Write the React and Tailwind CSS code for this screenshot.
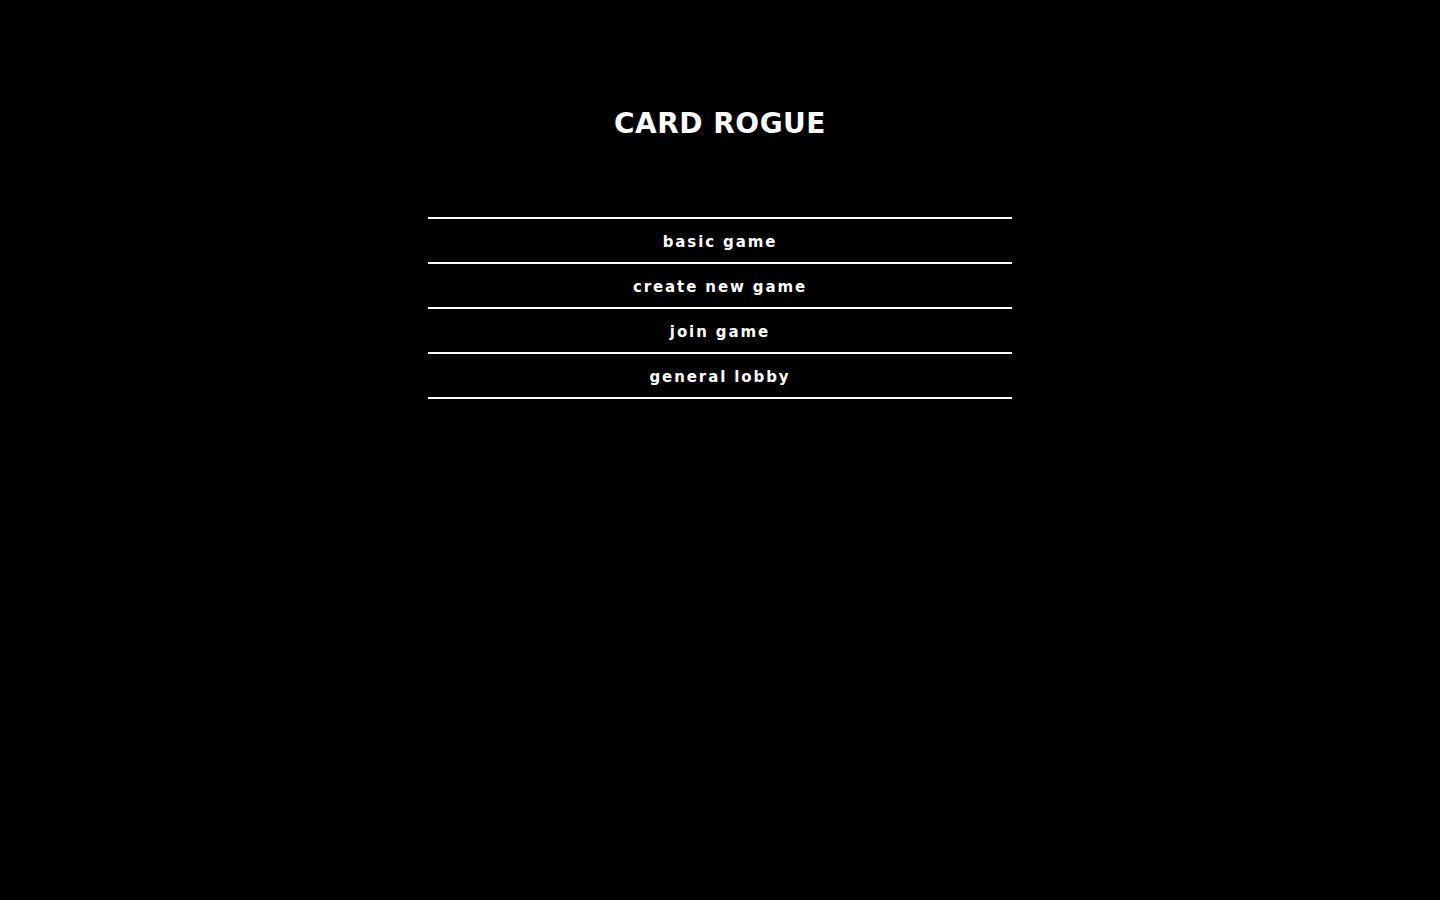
const items = ['basic game', 'create new game', 'join game', 'general lobby'];

export default function App() {
  return (
    <div className="min-h-screen bg-black text-white pt-[102px] font-['DejaVu_Sans',sans-serif]">
      {/* Title */}
      <h1 className="text-center text-[28px] leading-[44px] font-bold tracking-[0.5px]">CARD ROGUE</h1>

      {/* Menu */}
      <nav className="w-[584px] mx-auto mt-[71px] border-t-2 border-white flex flex-col">
        {items.map((label) => (
          <button
            key={label}
            className="h-[45px] pt-[4px] border-b-2 border-white text-[15px] font-bold tracking-[1.9px] text-white text-center cursor-pointer"
          >
            {label}
          </button>
        ))}
      </nav>
    </div>
  );
}
